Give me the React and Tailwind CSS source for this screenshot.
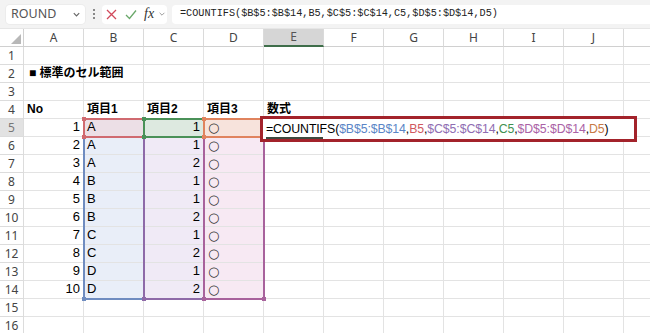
import React from "react";

const COLS = ["A", "B", "C", "D", "E", "F", "G", "H", "I", "J", ""];
const ROWS = Array.from({ length: 16 }, (_, i) => i + 1);

const data = [
  [1, "A", 1],
  [2, "A", 1],
  [3, "A", 2],
  [4, "B", 1],
  [5, "B", 1],
  [6, "B", 2],
  [7, "C", 1],
  [8, "C", 2],
  [9, "D", 1],
  [10, "D", 2],
];

const cellFont = { fontFamily: '"Liberation Sans", "Noto Sans CJK JP", sans-serif' };

function Cell({ r, c }) {
  let bg = "";
  let content = null;
  let align = "justify-start";
  let z = "";
  let vAlign = "items-end pb-[1px]";
  if (r === 2 && c === 0) {
    content = <span className="font-bold whitespace-nowrap text-[12px] pl-[2px]">■ 標準のセル範囲</span>;
    z = "relative z-10";
  }
  if (r === 4) {
    const h = ["No", "項目1", "項目2", "項目3", "数式"][c];
    if (h) content = <span className="font-bold whitespace-nowrap text-[12px]">{h}</span>;
  }
  if (r >= 5 && r <= 14) {
    const d = data[r - 5];
    if (c === 0) {
      content = d[0];
      align = "justify-end";
    } else if (c === 1) {
      content = d[1];
      bg = r === 5 ? "bg-[#ecdfe6]" : "bg-[#e9eef8]";
    } else if (c === 2) {
      content = d[2];
      align = "justify-end";
      bg = r === 5 ? "bg-[#dde9e0]" : "bg-[#f0eaf6]";
    } else if (c === 3) {
      content = (
        <span
          className="text-[13px] leading-[16px] text-[#333] pl-[1px]"
          style={{ fontFamily: '"DejaVu Sans", sans-serif' }}
        >
          ○
        </span>
      );
      vAlign = "items-center";
      bg = r === 5 ? "bg-[#f7e3dc]" : "bg-[#f7e9f3]";
    }
  }
  return (
    <div
      className={`${bg} ${align} ${z} ${vAlign} flex px-[3px] border-r border-b border-[#e3e3e3] text-[13px] text-black leading-[16px] overflow-visible`}
      style={cellFont}
    >
      {content}
    </div>
  );
}

function Range({ left, top, width, height, color }) {
  return (
    <div className="absolute pointer-events-none" style={{ left, top, width, height }}>
      <div className="absolute inset-0 border-2" style={{ borderColor: color }} />
      {[
        [-1, -1],
        [width - 3, -1],
        [-1, height - 3],
        [width - 3, height - 3],
      ].map(([x, y], i) => (
        <div key={i} className="absolute w-[4px] h-[4px]" style={{ left: x, top: y, background: color }} />
      ))}
    </div>
  );
}

export default function App() {
  const rowTop = (r) => 18 + (r - 1) * 18;
  const colLeft = (c) => 24 + c * 60;
  return (
    <div className="w-[650px] h-[333px] overflow-hidden bg-white relative" style={cellFont}>
      {/* Top bar */}
      <div className="h-[29px] bg-[#f3f3f3] flex items-center pl-[6px] border-b border-[#e6e6e6]">
        <div className="w-[79px] h-[19px] bg-white rounded-[4px] flex items-center justify-between pl-[5px] pr-[4px] shadow-[0_0_0_1px_#ececec]">
          <span className="text-[12.5px] text-[#555]" style={{ fontFamily: '"Noto Sans", sans-serif' }}>ROUND</span>
          <svg width="9" height="9" viewBox="0 0 10 10">
            <path d="M2 3.5 L5 6.5 L8 3.5" fill="none" stroke="#666" strokeWidth="1.3" />
          </svg>
        </div>
        <div className="w-[17px] flex flex-col items-center gap-[2px]">
          <div className="w-[2px] h-[2px] bg-[#666] rounded-full" />
          <div className="w-[2px] h-[2px] bg-[#666] rounded-full" />
          <div className="w-[2px] h-[2px] bg-[#666] rounded-full" />
        </div>
        <div className="w-[65px] h-[19px] bg-white rounded-[4px] flex items-center pl-[4px] gap-[8px]">
          <svg width="11" height="11" viewBox="0 0 11 11">
            <path d="M1 1 L10 10 M10 1 L1 10" stroke="#d1495b" strokeWidth="1.3" />
          </svg>
          <svg width="12" height="11" viewBox="0 0 12 11">
            <path d="M1 6 L4.5 9.5 L11 1.5" fill="none" stroke="#6aa86a" strokeWidth="1.3" />
          </svg>
          <span className="italic text-[14px] text-[#333] leading-none -ml-[1px]" style={{ fontFamily: '"Liberation Serif", serif' }}>
            fx
          </span>
          <svg width="8" height="8" viewBox="0 0 10 10" className="-ml-[4px]">
            <path d="M2 3.5 L5 6.5 L8 3.5" fill="none" stroke="#999" strokeWidth="1.2" />
          </svg>
        </div>
        <div className="ml-[5px] flex-1 h-[19px] bg-white rounded-l-[4px] flex items-center pl-[8px]">
          <span className="text-[10.2px] text-[#222] whitespace-nowrap" style={{ fontFamily: '"Liberation Mono", monospace' }}>
            =COUNTIFS($B$5:$B$14,B5,$C$5:$C$14,C5,$D$5:$D$14,D5)
          </span>
        </div>
      </div>

      {/* Sheet */}
      <div className="relative">
        <div className="grid grid-cols-[24px_repeat(11,60px)] auto-rows-[18px]">
          <div className="relative bg-white border-r border-b border-[#d0d0d0]">
            <svg width="10" height="10" viewBox="0 0 10 10" className="absolute right-[2px] bottom-[2px]">
              <path d="M10 0 L10 10 L0 10 Z" fill="#b8b8b8" />
            </svg>
          </div>
          {COLS.map((c, i) => (
            <div
              key={i}
              className={`flex items-center justify-center text-[12px] border-r border-[#dadada] ${
                c === "E" ? "bg-[#d6d6d6] text-[#555] border-b-2 border-b-[#3f6e4a]" : "bg-white text-[#444] border-b border-b-[#d0d0d0]"
              }`}
              style={{ fontFamily: '"Noto Sans", sans-serif' }}
            >
              {c}
            </div>
          ))}
          {ROWS.map((r) => (
            <React.Fragment key={r}>
              <div
                className={`flex items-center justify-center text-[12px] border-b border-r border-[#dcdcdc] ${
                  r === 5 ? "bg-[#e2e2e2] text-[#777]" : "bg-white text-[#444]"
                }`}
                style={{ fontFamily: '"Noto Sans", sans-serif' }}
              >
                {r}
              </div>
              {COLS.map((_, ci) => (
                <Cell key={ci} r={r} c={ci} />
              ))}
            </React.Fragment>
          ))}
        </div>

        {/* Range highlights */}
        <Range left={colLeft(1) - 1} top={rowTop(6) - 1} width={62} height={18 * 9 + 2} color="#6f8cc0" />
        <Range left={colLeft(2) - 1} top={rowTop(6) - 1} width={62} height={18 * 9 + 2} color="#8e6aa8" />
        <Range left={colLeft(3) - 1} top={rowTop(6) - 1} width={62} height={18 * 9 + 2} color="#a8629c" />
        <Range left={colLeft(1) - 1} top={rowTop(5) - 1} width={62} height={20} color="#d06a70" />
        <Range left={colLeft(2) - 1} top={rowTop(5) - 1} width={62} height={20} color="#4a9158" />
        <Range left={colLeft(3) - 1} top={rowTop(5) - 1} width={62} height={20} color="#e0835e" />

        {/* Edit box */}
        <div
          className="absolute border-[3px] border-[#a3232b] bg-white flex items-center pl-[3px]"
          style={{ left: 260, top: rowTop(5) - 3, width: 377, height: 26 }}
        >
          <span className="text-[12.3px] whitespace-nowrap text-black tracking-[-0.1px]" style={cellFont}>
            =COUNTIFS(
            <span className="text-[#5a85c6]">$B$5:$B$14</span>,
            <span className="text-[#d0585e]">B5</span>,
            <span className="text-[#8f6db2]">$C$5:$C$14</span>,
            <span className="text-[#3f9150]">C5</span>,
            <span className="text-[#aa62a6]">$D$5:$D$14</span>,
            <span className="text-[#c77a45]">D5</span>)
          </span>
          <div className="absolute left-[3px] bottom-[0px] w-[57px] h-[2px] bg-[#3e4a40]" />
        </div>
      </div>
    </div>
  );
}
